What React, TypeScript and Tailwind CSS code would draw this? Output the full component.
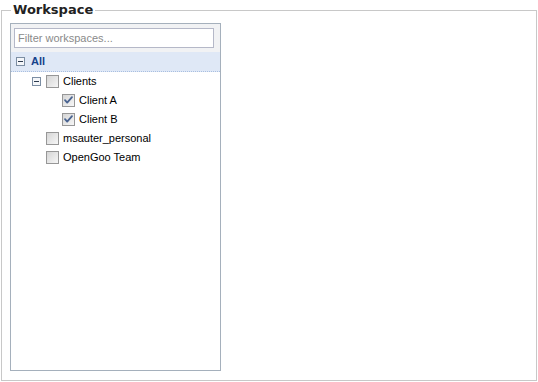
import React from "react";

type Node = {
  label: string;
  depth: number;
  expander?: boolean;
  checked?: boolean;
};

const nodes: Node[] = [
  { label: "Clients", depth: 1, expander: true },
  { label: "Client A", depth: 2, checked: true },
  { label: "Client B", depth: 2, checked: true },
  { label: "msauter_personal", depth: 1 },
  { label: "OpenGoo Team", depth: 1 },
];

function Minus() {
  return (
    <svg width="9" height="9" viewBox="0 0 9 9" aria-hidden>
      <rect x="0.5" y="0.5" width="8" height="8" fill="#f4f6f9" stroke="#7c8ea3" />
      <rect x="2" y="4" width="5" height="1" fill="#2d3b4f" />
    </svg>
  );
}

function Checkbox({ checked }: { checked?: boolean }) {
  return (
    <svg width="13" height="13" viewBox="0 0 13 13" aria-hidden>
      <defs>
        <linearGradient id="cbg" x1="0" y1="0" x2="1" y2="1">
          <stop offset="0" stopColor="#d4d4d4" />
          <stop offset="1" stopColor="#f8f8f8" />
        </linearGradient>
      </defs>
      <rect x="0.5" y="0.5" width="12" height="12" fill="url(#cbg)" stroke="#979797" />
      {checked && (
        <path d="M3 6.2 L5.2 8.6 L10 3.2" fill="none" stroke="#4a6491" strokeWidth="1.8" strokeLinecap="round" strokeLinejoin="round" />
      )}
    </svg>
  );
}

function Row({ node }: { node: Node }) {
  const indent = node.depth === 1 ? "pl-[17px]" : "pl-[33px]";
  return (
    <div className={`flex h-[19px] items-center ${indent}`}>
      <span className="flex w-4 justify-center">{node.expander && <Minus />}</span>
      <span className="ml-[2px] flex">
        <Checkbox checked={node.checked} />
      </span>
      <span className="ml-1 text-[11px] text-black">{node.label}</span>
    </div>
  );
}

export default function App() {
  return (
    <div className="h-[382px] w-[538px] bg-white pt-[2px] font-['Liberation_Sans',Arial,sans-serif]">
      <fieldset className="ml-[1px] h-[379px] w-[536px] border border-[#c8c8c8] px-[8px]">
        <legend className="ml-[1px] px-[2px] font-['DejaVu_Sans',Verdana,sans-serif] text-[13px] leading-4 font-bold text-[#222]">
          Workspace
        </legend>
        <div className="mt-[5px] flex h-[348px] w-[211px] flex-col border border-[#a5b0bc] bg-white">
          <div className="bg-[#f1f2f4] px-[3px] pt-1 pb-1">
            <div className="flex h-5 w-[200px] items-center border border-[#b5b8c8] bg-white pl-[3px] text-[11px] text-[#8a8a8a]">
              Filter workspaces...
            </div>
          </div>
          <div className="flex h-[20px] items-center border-b border-dotted border-[#a9bfe0] bg-[#dfe8f6] pl-[1px]">
            <span className="flex w-4 justify-center">
              <Minus />
            </span>
            <span className="ml-[3px] text-[11px] font-bold text-[#15428b]">All</span>
          </div>
          {nodes.map((n) => (
            <Row key={n.label} node={n} />
          ))}
        </div>
      </fieldset>
    </div>
  );
}
